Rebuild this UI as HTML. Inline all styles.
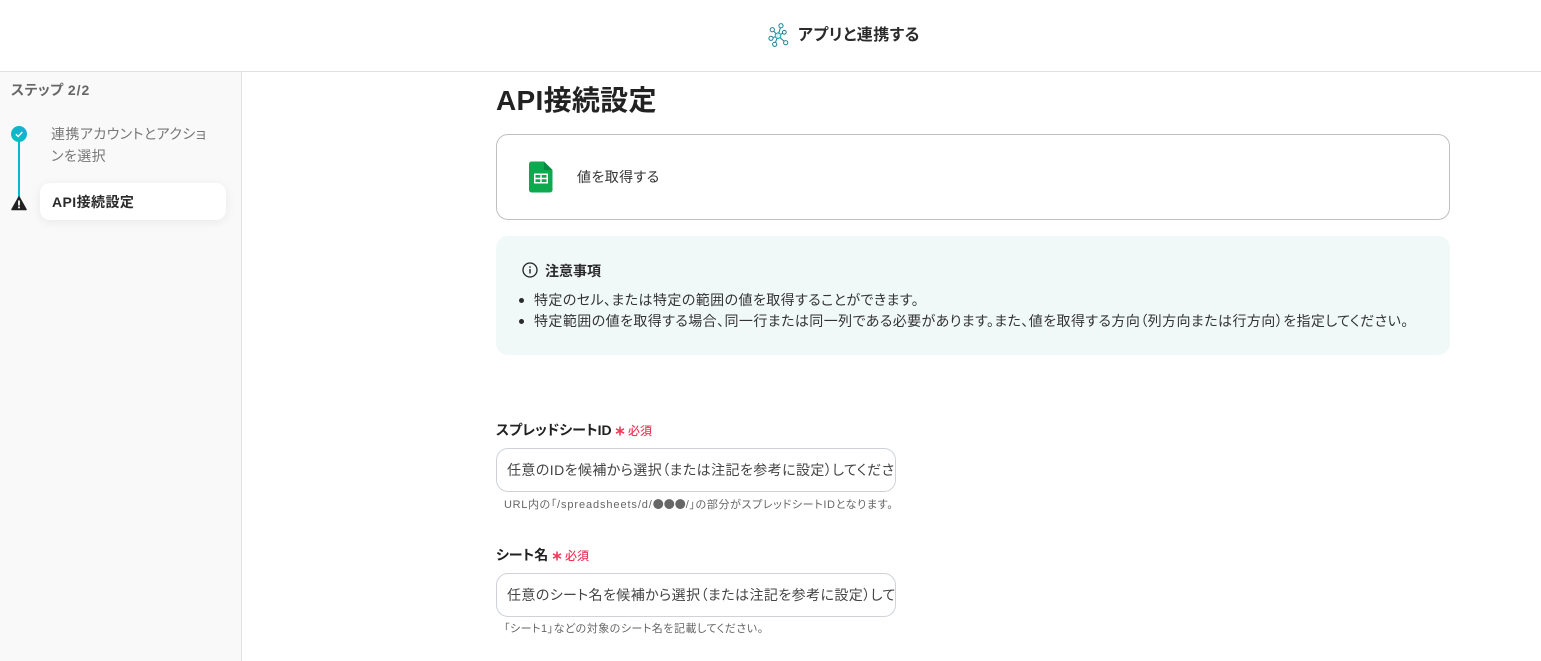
<!DOCTYPE html>
<html lang="ja"><head><meta charset="utf-8"><style>
html,body{margin:0;padding:0;width:1541px;height:661px;overflow:hidden;background:#fff}
body{position:relative;font-family:"Liberation Sans","Noto Sans CJK JP",sans-serif;color:#2b2b2b;font-feature-settings:"palt"}
.a{position:absolute;white-space:nowrap}
.cjk{font-family:"Liberation Sans","Noto Sans CJK JP",sans-serif;letter-spacing:.03em}
</style></head><body>
<div class="a" style="left:0;top:71px;width:1541px;height:1px;background:#e2e2e2"></div>
<svg class="a" style="left:767px;top:23px" width="23" height="24" viewBox="0 0 23 24" fill="#fff" stroke="#1c7f93" stroke-width="1"><path d="M11 12.700 14 2.700M11 12.700 5.300 6.700M11 12.700 17.300 9.300M11 12.700 4 15.300M11 12.700 18.700 19.700M11 12.700 7.700 21.300" fill="none"/><path d="M11 9.700 13.700 11.200 13.700 14.200 11 15.700 8.300 14.200 8.300 11.200Z" stroke="#1aa7b8" fill="#d8f0f3"/><circle cx="14" cy="2.700" r="2.100"/><circle cx="5.300" cy="6.700" r="2.100"/><circle cx="17.300" cy="9.300" r="1.900"/><circle cx="4" cy="15.300" r="2.100"/><circle cx="18.700" cy="19.700" r="2.100"/><circle cx="7.700" cy="21.300" r="2.100"/></svg>
<div class="a cjk" style="left:798px;top:25px;font-size:16px;line-height:21px;font-weight:700;color:#2b2b2b">アプリと連携する</div>

<div class="a" style="left:0;top:72px;width:241px;height:589px;background:#f9f9f9;border-right:1px solid #e2e2e2"></div>
<div class="a cjk" style="left:11px;top:80px;font-size:14px;line-height:20px;font-weight:700;color:#666">ステップ <span style="letter-spacing:1px">2/2</span></div>
<div class="a" style="left:17.750px;top:140px;width:2.500px;height:58px;background:#00bccd"></div>
<svg class="a" style="left:11px;top:126px" width="16" height="16" viewBox="0 0 16 16"><defs><linearGradient id="g" x1="1" y1="0" x2="0" y2="1"><stop offset="0" stop-color="#1ea7dc"/><stop offset="1" stop-color="#00c6b8"/></linearGradient></defs><circle cx="8" cy="8" r="8" fill="url(#g)"/><path d="M4.800 8.200 7.200 10.500 11.300 6" fill="none" stroke="#fff" stroke-width="1.400"/></svg>
<div class="a cjk" style="left:51px;top:123px;width:162px;font-size:14px;line-height:22px;color:#777;white-space:normal">連携アカウントとアクションを選択</div>
<svg class="a" style="left:11px;top:196px" width="16" height="15" viewBox="0 0 16 15"><path d="M8 1 15 13.500H1Z" fill="#222" stroke="#222" stroke-width="1.500" stroke-linejoin="round"/><rect x="7.100" y="4.500" width="1.800" height="5" fill="#fff"/><rect x="7.100" y="10.500" width="1.800" height="1.800" fill="#fff"/></svg>
<div class="a" style="left:40px;top:183px;width:186px;height:37px;background:#fff;border-radius:10px;box-shadow:0 2px 10px rgba(0,0,0,.07)"></div>
<div class="a cjk" style="left:52px;top:192px;font-size:14px;line-height:21px;font-weight:700;color:#2b2b2b">API接続設定</div>

<div class="a cjk" style="left:496px;top:82px;font-size:28px;line-height:38px;font-weight:700;color:#222;letter-spacing:.3px">API接続設定</div>
<div class="a" style="left:496px;top:134px;width:952px;height:84px;border:1px solid #c0c0c0;border-radius:12px"></div>
<svg class="a" style="left:529px;top:161px" width="24" height="32" viewBox="0 0 24 32"><path d="M2.500 .5H15L23.500 9V29A2.500 2.500 0 0 1 21 31.500H2.500A2.500 2.500 0 0 1 0 29V3A2.500 2.500 0 0 1 2.500 .5Z" fill="#0ea84f"/><path d="M15 .5 23.500 9H15Z" fill="#0b8a42"/><path d="M5 12.500H19V22.500H5ZM6.500 14V16.800H11.300V14ZM12.700 14V16.800H17.500V14ZM6.500 18.200V21H11.300V18.200ZM12.700 18.200V21H17.500V18.200Z" fill="#fff" fill-rule="evenodd"/></svg>
<div class="a cjk" style="left:577px;top:167px;font-size:14px;line-height:21px;color:#333">値を取得する</div>

<div class="a" style="left:496px;top:236px;width:954px;height:119px;background:#f1f9f8;border-radius:12px"></div>
<svg class="a" style="left:522px;top:262px" width="16" height="16" viewBox="0 0 16 16" fill="none"><circle cx="8" cy="8" r="7" stroke="#222" stroke-width="1.300"/><rect x="7.300" y="7" width="1.400" height="4.500" fill="#222"/><rect x="7.300" y="4.300" width="1.400" height="1.500" fill="#222"/></svg>
<div class="a cjk" style="left:545px;top:261px;font-size:14px;line-height:20px;font-weight:700;color:#2b2b2b;letter-spacing:0">注意事項</div>
<div class="a" style="left:519px;top:297.500px;width:5px;height:5px;border-radius:50%;background:#2b2b2b"></div>
<div class="a" style="left:519px;top:318.500px;width:5px;height:5px;border-radius:50%;background:#2b2b2b"></div>
<div class="a cjk" style="left:534px;top:290px;font-size:14px;line-height:20px;color:#333">特定のセル、または特定の範囲の値を取得することができます。</div>
<div class="a cjk" style="left:534px;top:311px;font-size:14px;line-height:20px;color:#333">特定範囲の値を取得する場合、同一行または同一列である必要があります。また、値を取得する方向（列方向または行方向）を指定してください。</div>

<div class="a cjk" style="left:496px;top:420px;font-size:14px;line-height:20px;font-weight:700;color:#222;letter-spacing:0">スプレッドシートID</div>
<svg class="a" style="left:615px;top:426px" width="10" height="10" viewBox="0 0 10 10" stroke="#f0395a" stroke-width="1.600"><path d="M5 .5V9.500M1 2.800 9 7.200M9 2.800 1 7.200"/></svg>
<div class="a cjk" style="left:628px;top:421px;font-size:12px;line-height:20px;color:#f0395a;letter-spacing:0;font-weight:500">必須</div>
<div class="a" style="left:496px;top:448px;width:398px;height:42px;border:1px solid #cfd3d8;border-radius:12px"></div>
<div class="a cjk" style="left:507px;top:459px;width:388px;overflow:hidden;font-size:14px;line-height:22px;color:#444">任意のIDを候補から選択（または注記を参考に設定）してください</div>
<div class="a cjk" style="left:504px;top:496px;font-size:11px;line-height:17px;color:#666;letter-spacing:.65px">URL内の「<span style="letter-spacing:.9px">/spreadsheets/d/</span><span style="font-family:'Noto Sans CJK JP',sans-serif;font-feature-settings:normal;letter-spacing:0">●●●</span>/」の部分がスプレッドシートIDとなります。</div>

<div class="a cjk" style="left:496px;top:545px;font-size:14px;line-height:20px;font-weight:700;color:#222;letter-spacing:0">シート名</div>
<svg class="a" style="left:552px;top:551px" width="10" height="10" viewBox="0 0 10 10" stroke="#f0395a" stroke-width="1.600"><path d="M5 .5V9.500M1 2.800 9 7.200M9 2.800 1 7.200"/></svg>
<div class="a cjk" style="left:565px;top:546px;font-size:12px;line-height:20px;color:#f0395a;letter-spacing:0;font-weight:500">必須</div>
<div class="a" style="left:496px;top:573px;width:398px;height:42px;border:1px solid #cfd3d8;border-radius:12px"></div>
<div class="a cjk" style="left:507px;top:584px;width:388px;overflow:hidden;font-size:14px;line-height:22px;color:#444">任意のシート名を候補から選択（または注記を参考に設定）してください</div>
<div class="a cjk" style="left:504px;top:621px;font-size:11px;line-height:17px;color:#666;letter-spacing:.5px">「シート1」などの対象のシート名を記載してください。</div>
</body></html>
